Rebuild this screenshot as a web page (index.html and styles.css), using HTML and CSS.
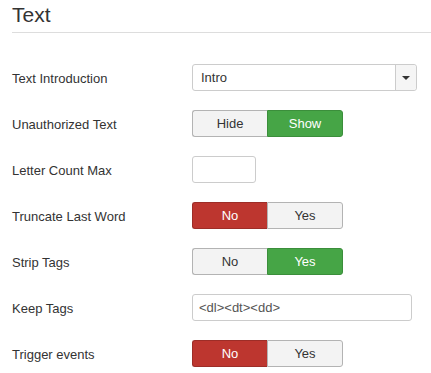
FILE: index.html
```html
<!DOCTYPE html>
<html lang="en">
<head>
    <meta charset="UTF-8">
    <title>Text</title>
    <link rel="stylesheet" href="styles.css">
</head>
<body>
    <div class="panel">
        <h2>Text</h2>
        <div class="control-group">
            <label>Text Introduction</label>
            <div class="select">
                <span class="select-value">Intro</span>
                <span class="select-caret"><span class="caret"></span></span>
            </div>
        </div>
        <div class="control-group">
            <label>Unauthorized Text</label>
            <div class="btn-group">
                <span class="btn">Hide</span>
                <span class="btn btn-success">Show</span>
            </div>
        </div>
        <div class="control-group">
            <label>Letter Count Max</label>
            <input type="text" class="input-mini">
        </div>
        <div class="control-group">
            <label>Truncate Last Word</label>
            <div class="btn-group">
                <span class="btn btn-danger">No</span>
                <span class="btn">Yes</span>
            </div>
        </div>
        <div class="control-group">
            <label>Strip Tags</label>
            <div class="btn-group">
                <span class="btn">No</span>
                <span class="btn btn-success">Yes</span>
            </div>
        </div>
        <div class="control-group">
            <label>Keep Tags</label>
            <input type="text" class="input-wide" value="&lt;dl&gt;&lt;dt&gt;&lt;dd&gt;">
        </div>
        <div class="control-group">
            <label>Trigger events</label>
            <div class="btn-group">
                <span class="btn btn-danger">No</span>
                <span class="btn">Yes</span>
            </div>
        </div>
    </div>
</body>
</html>
```

FILE: styles.css
```css
body {
    margin: 0;
    font-family: 'Liberation Sans', Arial, sans-serif;
    font-size: 13px;
    color: #333;
    background: #fff;
}
.panel {
    padding-left: 12px;
}
h2 {
    margin: 0;
    padding-top: 3px;
    font-size: 21px;
    font-weight: normal;
    line-height: 24px;
    height: 29px;
    border-bottom: 1px solid #ddd;
    margin-bottom: 31px;
}
.control-group {
    display: flex;
    align-items: center;
    height: 27px;
    margin-bottom: 19px;
}
label {
    width: 180px;
    flex-shrink: 0;
    padding-top: 2px;
}
.select {
    display: flex;
    width: 223px;
    height: 25px;
    border: 1px solid #ccc;
    border-radius: 3px;
    background: #fff;
}
.select-value {
    flex: 1;
    padding-left: 8px;
    line-height: 25px;
}
.select-caret {
    width: 20px;
    border-left: 1px solid #ccc;
    background: #f5f5f5;
    display: flex;
    align-items: center;
    justify-content: center;
    border-radius: 0 3px 3px 0;
}
.caret {
    width: 0;
    height: 0;
    border-left: 4px solid transparent;
    border-right: 4px solid transparent;
    border-top: 4px solid #333;
}
.btn-group {
    display: flex;
}
.btn {
    box-sizing: border-box;
    width: 75px;
    height: 27px;
    line-height: 25px;
    text-align: center;
    background: #f3f3f3;
    border: 1px solid #b3b3b3;
    color: #333;
}
.btn:first-child {
    border-radius: 3px 0 0 3px;
    border-right: none;
}
.btn:last-child {
    width: 76px;
    border-radius: 0 3px 3px 0;
}
.btn-success {
    background: #46a546;
    border-color: #3b8e3b;
    color: #fff;
}
.btn-danger {
    background: #bd362f;
    border-color: #9d2d27;
    color: #fff;
}
input {
    box-sizing: border-box;
    height: 27px;
    border: 1px solid #ccc;
    border-radius: 3px;
    font-family: 'Liberation Sans', Arial, sans-serif;
    font-size: 13px;
    color: #555;
    padding: 0 6px;
}
.input-mini {
    width: 64px;
}
.input-wide {
    width: 220px;
}
```
